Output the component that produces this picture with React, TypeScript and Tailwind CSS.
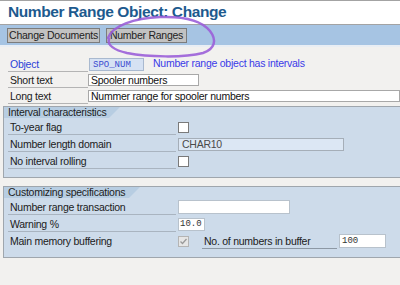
import React from 'react'

const Check = ({ checked = false, disabled = false }: { checked?: boolean; disabled?: boolean }) => (
  <div
    className={`w-[11px] h-[11px] border ${
      disabled ? 'border-[#b4b4b4] bg-[#e6e6e6]' : 'border-[#7a7a7a] bg-white'
    } flex items-center justify-center`}>
    {checked && (
      <svg width="9" height="9" viewBox="0 0 9 9">
        <path d="M1.5 4.5 L3.5 6.5 L7.5 2" fill="none" stroke="#9a9a9a" strokeWidth="1.3" />
      </svg>
    )}
  </div>
)

const Row = ({ label, children }: { label: string; children?: React.ReactNode }) => (
  <div className="flex items-center h-[16px]">
    <div className="ml-[4px] w-[168px] shrink-0 h-[16px] leading-[16px] pl-[2px] border-b border-[#a9b4c0] text-[#202020] whitespace-nowrap">
      {label}
    </div>
    <div className="ml-[2px] flex items-center">{children}</div>
  </div>
)

const Group = ({ title, tabWidth, children }: { title: string; tabWidth: string; children: React.ReactNode }) => (
  <div className="ml-[3px] w-[420px] border border-[#9fa6ad] bg-[#cddbea] pb-[8px]">
    <div
      className={`${tabWidth} h-[11px] leading-[11px] pl-[4px] bg-[#b7cde2] text-[#1d1d1d] whitespace-nowrap [clip-path:polygon(0_0,100%_0,calc(100%-11px)_100%,0_100%)]`}>
      {title}
    </div>
    <div className="pt-[1px] flex flex-col gap-[1px]">{children}</div>
  </div>
)

export default function App() {
  return (
    <div className="relative w-[400px] h-[285px] overflow-hidden bg-[#f2f1ef] font-['Liberation_Sans',Arial,sans-serif] text-[10.5px] tracking-[-0.25px]">
      {/* title */}
      <div className="h-[25px] bg-white border-t border-[#4a4a4a] border-b border-[#a3a3a3] pl-[8px] text-[15.5px] font-bold tracking-[-0.4px] leading-[22px] text-[#1d5a8e] whitespace-nowrap">
        Number Range Object: Change
      </div>

      {/* toolbar */}
      <div className="h-[22px] bg-[#a6c4e3] flex items-center gap-[6px] pl-[7px] border-b-2 border-[#e9eef4]">
        <div className="w-[93px] h-[15px] leading-[13px] text-center bg-[#c2c2c2] border border-[#7c7c7c] text-[#222] whitespace-nowrap">
          Change Documents
        </div>
        <div className="w-[81px] h-[15px] leading-[13px] text-center bg-[#c2c2c2] border border-[#7c7c7c] text-[#222] whitespace-nowrap">
          Number Ranges
        </div>
      </div>

      {/* header fields */}
      <div className="pt-[9px]">
        <div className="flex items-center h-[16px]">
          <div className="ml-[8px] w-[80px] shrink-0 h-[16px] leading-[16px] pl-[2px] border-b border-[#b4b4b4] text-[#2b3fd8]">
            Object
          </div>
          <div className="ml-[1px] w-[55px] h-[13px] leading-[12px] pl-[3px] bg-[#d6e2f3] border border-[#a9b9cf] text-[#3a4cd0] font-['Liberation_Mono',monospace] text-[9px] tracking-normal">
            SPO_NUM
          </div>
          <div className="ml-[9px] text-[#3a3ae8] whitespace-nowrap">Number range object has intervals</div>
        </div>
        <div className="flex items-center h-[16px]">
          <div className="ml-[8px] w-[80px] shrink-0 h-[16px] leading-[16px] pl-[2px] border-b border-[#b4b4b4] text-[#202020]">
            Short text
          </div>
          <div className="w-[111px] h-[12px] leading-[10px] pl-[2px] bg-white border border-[#a8a8a8] text-[#111] whitespace-nowrap">
            Spooler numbers
          </div>
        </div>
        <div className="flex items-center h-[16px]">
          <div className="ml-[8px] w-[80px] shrink-0 h-[16px] leading-[16px] pl-[2px] border-b border-[#b4b4b4] text-[#202020]">
            Long text
          </div>
          <div className="w-[320px] h-[12px] leading-[10px] pl-[2px] bg-white border border-[#a8a8a8] text-[#111] whitespace-nowrap">
            Nummer range for spooler numbers
          </div>
        </div>
      </div>

      <div className="pt-[2px]">
        <Group title="Interval characteristics" tabWidth="w-[116px]">
          <Row label="To-year flag">
            <Check />
          </Row>
          <Row label="Number length domain">
            <div className="w-[166px] h-[13px] leading-[11px] pl-[3px] bg-[#dce7f4] border border-[#a5aeb8] text-[#4a4a4a]">
              CHAR10
            </div>
          </Row>
          <Row label="No interval rolling">
            <Check />
          </Row>
        </Group>
      </div>

      <div className="pt-[8px]">
        <Group title="Customizing specifications" tabWidth="w-[136px]">
          <Row label="Number range transaction">
            <div className="w-[112px] h-[14px] bg-white border border-[#b8c2cc]" />
          </Row>
          <Row label="Warning %">
            <div className="w-[27px] h-[13px] leading-[11px] pl-[1px] bg-white border border-[#b8c2cc] text-[#333] font-['Liberation_Mono',monospace] text-[9px] tracking-normal">
              10.0
            </div>
          </Row>
          <div className="flex items-center h-[16px]">
            <div className="ml-[4px] w-[168px] shrink-0 h-[16px] leading-[16px] pl-[2px] text-[#202020] whitespace-nowrap">
              Main memory buffering
            </div>
            <div className="ml-[2px]">
              <Check checked disabled />
            </div>
            <div className="ml-[13px] w-[135px] h-[16px] leading-[16px] pl-[2px] border-b border-[#8d98a4] text-[#202020] whitespace-nowrap">
              No. of numbers in buffer
            </div>
            <div className="ml-[2px] w-[47px] h-[14px] leading-[12px] pl-[2px] bg-white border border-[#b8c2cc] text-[#333] font-['Liberation_Mono',monospace] text-[9px] tracking-normal">
              100
            </div>
          </div>
        </Group>
      </div>

      {/* hand-drawn annotation */}
      <svg className="absolute left-0 top-0 pointer-events-none" width="400" height="285" viewBox="0 0 400 285">
        <path
          d="M108 38 C 112 26, 134 18, 160 17 C 186 16, 202 21, 210 31 C 217 40, 215 49, 203 53 C 183 58, 148 57, 127 53 C 114 50, 107 45, 109 39"
          fill="none"
          stroke="#9b5fd8"
          strokeWidth="2.5"
          strokeLinecap="round"
          opacity="0.9"
        />
      </svg>
    </div>
  )
}
